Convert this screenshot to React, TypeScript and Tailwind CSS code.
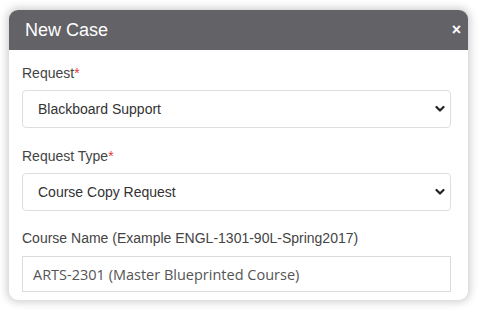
import React from 'react';

const Chevron = () => (
  <svg width="10" height="7" viewBox="0 0 10 7" className="pointer-events-none absolute right-[5px] top-1/2 -translate-y-1/2">
    <path d="M1.5 1.5 L5 5 L8.5 1.5" fill="none" stroke="#222" strokeWidth="2.2" strokeLinecap="round" strokeLinejoin="round" />
  </svg>
);

const SelectField = ({ label, value }: { label: string; value: string }) => (
  <div className="flex flex-col">
    <label className="h-5 text-[14px] leading-5 text-[#444]">
      {label}
      <span className="text-[#e53935]">*</span>
    </label>
    <div className="relative mt-[7px] h-[38px] rounded-[4px] border border-[#dedede] bg-white">
      <select
        defaultValue={value}
        className="h-full w-full appearance-none bg-transparent pl-[15px] text-[14px] text-[#333] outline-none"
      >
        <option>{value}</option>
      </select>
      <Chevron />
    </div>
  </div>
);

export default function App() {
  return (
    <div className="h-[313px] w-[481px] bg-white pl-[9px] pt-[10px] font-['Liberation_Sans',Arial,sans-serif]">
      <div className="flex h-[290px] w-[459px] flex-col overflow-hidden rounded-[9px] bg-white shadow-[0_0_8px_2px_rgba(0,0,0,0.2)]">
        <div className="flex h-10 items-center justify-between bg-[#636267] pl-[16px] pr-[7px] text-white">
          <span className="text-[18px] leading-none">New Case</span>
          <span className="text-[16px] font-bold leading-none">×</span>
        </div>
        <div className="flex flex-col pl-[13px] pr-[17px] pt-[13px]">
          <SelectField label="Request" value="Blackboard Support" />
          <div className="mt-[18px]">
            <SelectField label="Request Type" value="Course Copy Request" />
          </div>
          <div className="mt-[17px] flex flex-col">
            <label className="h-5 text-[14px] leading-5 text-[#444]">
              Course Name (Example ENGL-1301-90L-Spring2017)
            </label>
            <input
              defaultValue="ARTS-2301 (Master Blueprinted Course)"
              className="mt-[8px] h-[36px] w-full border border-[#dcdcdc] bg-white pl-[10px] font-['Open_Sans',sans-serif] text-[14.5px] text-[#555] outline-none"
            />
          </div>
        </div>
      </div>
    </div>
  );
}
